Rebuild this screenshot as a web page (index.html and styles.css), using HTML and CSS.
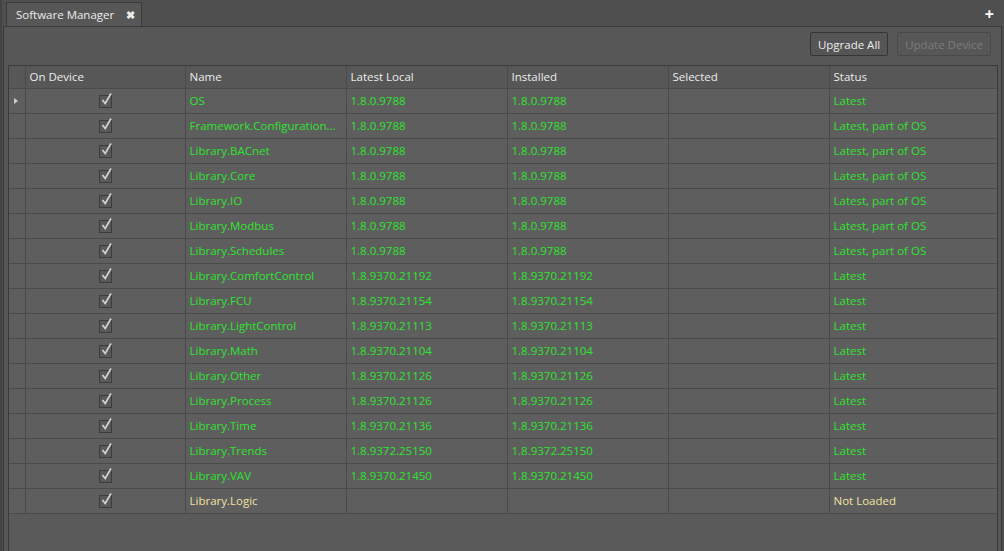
FILE: index.html
```
<!DOCTYPE html>
<html lang="en">
<head>
    <meta charset="UTF-8">
    <title>Software Manager</title>
    <link rel="stylesheet" href="styles.css">
</head>
<body>
    <div class="tab-strip">
        <div class="tab">
            <span class="tab-title">Software Manager</span>
            <span class="tab-close">&#x2716;</span>
        </div>
        <span class="tab-add">+</span>
    </div>
    <div class="panel">
        <div class="toolbar">
            <button type="button" class="btn">Upgrade All</button>
            <button type="button" class="btn" disabled>Update Device</button>
        </div>
        <div class="grid">
            <table>
                <colgroup>
                    <col class="c-rh"><col class="c-dev"><col class="c-std"><col class="c-std"><col class="c-std"><col class="c-std"><col>
                </colgroup>
                <thead>
                    <tr><th></th><th>On Device</th><th>Name</th><th>Latest Local</th><th>Installed</th><th>Selected</th><th>Status</th></tr>
                </thead>
                <tbody id="rows"></tbody>
            </table>
        </div>
    </div>

    <script>
        const packages = [
            ['OS', '1.8.0.9788', '1.8.0.9788', 'Latest'],
            ['Framework.ConfigurationManager', '1.8.0.9788', '1.8.0.9788', 'Latest, part of OS'],
            ['Library.BACnet', '1.8.0.9788', '1.8.0.9788', 'Latest, part of OS'],
            ['Library.Core', '1.8.0.9788', '1.8.0.9788', 'Latest, part of OS'],
            ['Library.IO', '1.8.0.9788', '1.8.0.9788', 'Latest, part of OS'],
            ['Library.Modbus', '1.8.0.9788', '1.8.0.9788', 'Latest, part of OS'],
            ['Library.Schedules', '1.8.0.9788', '1.8.0.9788', 'Latest, part of OS'],
            ['Library.ComfortControl', '1.8.9370.21192', '1.8.9370.21192', 'Latest'],
            ['Library.FCU', '1.8.9370.21154', '1.8.9370.21154', 'Latest'],
            ['Library.LightControl', '1.8.9370.21113', '1.8.9370.21113', 'Latest'],
            ['Library.Math', '1.8.9370.21104', '1.8.9370.21104', 'Latest'],
            ['Library.Other', '1.8.9370.21126', '1.8.9370.21126', 'Latest'],
            ['Library.Process', '1.8.9370.21126', '1.8.9370.21126', 'Latest'],
            ['Library.Time', '1.8.9370.21136', '1.8.9370.21136', 'Latest'],
            ['Library.Trends', '1.8.9372.25150', '1.8.9372.25150', 'Latest'],
            ['Library.VAV', '1.8.9370.21450', '1.8.9370.21450', 'Latest'],
            ['Library.Logic', '', '', 'Not Loaded']
        ];

        const check = '<span class="check"><svg width="13" height="14" viewBox="0 0 13 14"><path d="M2.5 8 L5.2 11.5 L11 1.5" fill="none" stroke="#d2d2d2" stroke-width="1.7"/></svg></span>';
        const tbody = document.getElementById('rows');
        packages.forEach((p, i) => {
            const tr = document.createElement('tr');
            if (p[3] === 'Not Loaded') tr.className = 'not-loaded';
            tr.innerHTML =
                '<td class="rh">' + (i === 0 ? '<span class="arrow"></span>' : '') + '</td>' +
                '<td class="dev">' + check + '</td>' +
                '<td class="name">' + (p[0].length > 28 ? 'Framework.Configuration...' : p[0]) + '</td>' +
                '<td>' + p[1] + '</td><td>' + p[2] + '</td><td></td><td>' + p[3] + '</td>';
            tbody.appendChild(tr);
        });
    </script>
</body>
</html>
```
FILE: styles.css
```
:root {
    --bg: #4f4f4f;
    --panel: #575757;
    --cell: #5e5e5e;
    --line: #4a4a4a;
    --edge: #3a3a3a;
    --green: #2ee42e;
    --pale: #f0e2a0;
}

body { margin: 0; height: 551px; overflow: hidden; background-color: var(--bg); font-family: "Open Sans", "Noto Sans", sans-serif; font-size: 11.5px; color: #e6e6e6; border-left: 2px solid #444; box-sizing: border-box; }

.tab-strip { display: flex; align-items: flex-end; height: 26px; padding-left: 4px; padding-right: 10px; }
.tab { display: flex; align-items: center; gap: 12px; height: 24px; padding: 0 6px 0 9px; background-color: var(--panel); border: 1px solid var(--edge); border-bottom: none; box-sizing: border-box; }
.tab-title { color: #ececec; }
.tab-close { font-size: 11px; font-weight: bold; color: #ececec; }
.tab-add { margin-left: auto; align-self: center; padding-top: 2px; font-size: 16px; font-weight: bold; color: #fff; line-height: 1; }

.panel { height: 525px; margin-left: 1px; margin-right: 2px; background-color: var(--panel); border: 1px solid var(--edge); border-bottom: none; box-sizing: border-box; display: flex; flex-direction: column; }
.toolbar { display: flex; justify-content: flex-end; gap: 9px; padding: 5px 10px 9px 0; }
.btn { height: 24px; padding: 0 7px; font-family: inherit; font-size: 11.5px; color: #ececec; background-color: #555; border: 1px solid #353535; border-radius: 2px; }
.btn:disabled { color: #7c7c7c; border-color: #4a4a4a; background-color: #575757; }

.grid { flex: 1; margin-left: 4px; margin-right: 3px; background-color: #5a5a5a; border: 1px solid var(--edge); border-bottom: none; }
table { width: 100%; border-collapse: collapse; table-layout: fixed; }
.c-rh { width: 16px; }
.c-dev { width: 160px; }
.c-std { width: 161px; }
th, td { height: 22px; padding: 0 0 2px 4px; border-right: 1px solid var(--line); border-bottom: 1px solid var(--line); text-align: left; white-space: nowrap; overflow: hidden; text-overflow: ellipsis; }
th { height: 21px; padding-bottom: 1px; font-weight: normal; color: #ececec; background-color: var(--panel); }
td { color: var(--green); background-color: var(--cell); }
th:last-child, td:last-child { border-right: none; }
.not-loaded td { color: var(--pale); }
td.rh { padding: 0; position: relative; }
.arrow { position: absolute; left: 5px; top: 9px; width: 0; height: 0; border-left: 4px solid #cfcfcf; border-top: 3.5px solid transparent; border-bottom: 3.5px solid transparent; }
td.dev { padding: 0 0 2px; text-align: center; }
.check { display: inline-block; width: 11px; height: 11px; margin-top: 3px; border: 1px solid #3c3c3c; background-color: #595959; position: relative; vertical-align: middle; }
.check svg { position: absolute; left: 0; top: -4px; }
```
